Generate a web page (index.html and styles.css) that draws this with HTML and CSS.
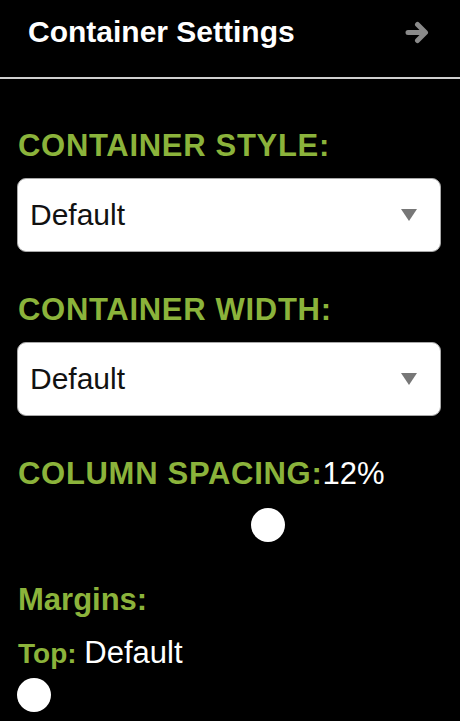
FILE: index.html
```html
<html>
    <head>
        <link rel="stylesheet" href="styles.css">
    </head>
    <body>

        <!--Panel header-->
        <div class="panel_header">
            <span class="panel_title">Container Settings</span>
            <svg class="panel_arrow" width="24" height="25" viewBox="0 0 24 25">
                <path d="M3 12.5 H20 M12.5 4.5 L20.5 12.5 L12.5 20.5" fill="none" stroke="#8a8a8a" stroke-width="5" stroke-linecap="round" stroke-linejoin="round"/>
            </svg>
        </div>

        <div class="panel_body">

            <!--Container style-->
            <div class="field field_first">
                <div class="field_label caps">CONTAINER STYLE:</div>
                <div class="select_box">
                    <span class="select_text">Default</span>
                    <svg class="select_arrow" width="16" height="12" viewBox="0 0 16 12">
                        <polygon points="0,0 16,0 8,12" fill="#777"/>
                    </svg>
                </div>
            </div>

            <!--Container width-->
            <div class="field">
                <div class="field_label caps">CONTAINER WIDTH:</div>
                <div class="select_box">
                    <span class="select_text">Default</span>
                    <svg class="select_arrow" width="16" height="12" viewBox="0 0 16 12">
                        <polygon points="0,0 16,0 8,12" fill="#777"/>
                    </svg>
                </div>
            </div>

            <!--Column spacing-->
            <div class="field">
                <div class="field_label caps">COLUMN SPACING:<span class="field_value">12%</span></div>
                <input class="slider" type="range" min="0" max="20" value="12">
            </div>

            <!--Margins-->
            <div class="field">
                <div class="field_label">Margins:</div>
                <div class="sub_label">Top: <span class="field_value">Default</span></div>
                <input class="slider slider_small" type="range" min="0" max="20" value="0">
            </div>

        </div>
    </body>
</html>
```

FILE: styles.css
```css
html,body{
    border:0;
    margin:0;
    padding:0;
    background: #000;
    font-family: "Liberation Sans", Arial, sans-serif;
}

.panel_header{
    display: flex;
    justify-content: space-between;
    align-items: center;
    padding: 14px 31px 27px 28px;
    border-bottom: 2px solid #cfcfcf;
}

.panel_title{
    color: #fff;
    font-size: 30px;
    font-weight: bold;
    line-height: 36px;
}

.panel_arrow{
    display: block;
}

.panel_body{
    padding: 0 19px 0 17px;
}

.field{
    margin-top: 40px;
}

.field_first{
    margin-top: 49px;
}

.field_label{
    color: #8bb33b;
    font-size: 31px;
    font-weight: bold;
    line-height: 36px;
    padding-left: 1px;
}

.caps{
    letter-spacing: 0.7px;
}

.field_value{
    color: #fff;
    font-weight: normal;
    font-size: 31px;
    letter-spacing: 0;
}

.select_box{
    margin-top: 14px;
    height: 72px;
    display: flex;
    justify-content: space-between;
    align-items: center;
    padding: 0 23px 0 12px;
    background: #fff;
    border: 1px solid #a8a8a8;
    border-radius: 9px;
}

.select_text{
    color: #111;
    font-size: 30px;
    line-height: 36px;
}

.select_arrow{
    display: block;
}

.slider{
    -webkit-appearance: none;
    appearance: none;
    display: block;
    width: 100%;
    height: 34px;
    margin: 16px 0 0 0;
    padding: 0;
    background: transparent;
}

.slider::-webkit-slider-runnable-track{
    height: 34px;
    background: transparent;
}

.slider::-webkit-slider-thumb{
    -webkit-appearance: none;
    width: 34px;
    height: 34px;
    border-radius: 50%;
    background: #fff;
    border: none;
}

.sub_label{
    margin-top: 17px;
    color: #8bb33b;
    font-size: 28px;
    font-weight: bold;
    line-height: 36px;
    padding-left: 1px;
}

.sub_label .field_value{
    font-size: 31px;
}

.slider_small{
    margin-top: 6px;
}
```
